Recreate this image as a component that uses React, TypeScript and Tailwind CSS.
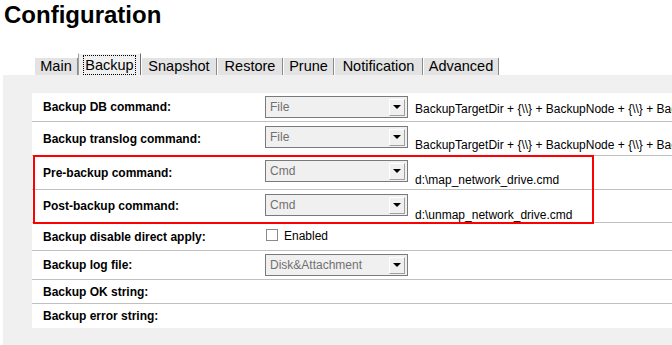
import type { ReactNode } from 'react';

const TABS = [
  { name: 'Main', w: 'w-[44px]' },
  { name: 'Backup', w: 'w-[63px]', active: true },
  { name: 'Snapshot', w: 'w-[76px]' },
  { name: 'Restore', w: 'w-[66px]' },
  { name: 'Prune', w: 'w-[51px]' },
  { name: 'Notification', w: 'w-[89px]' },
  { name: 'Advanced', w: 'w-[76px]' },
];

function Select({ value }: { value: string }) {
  return (
    <div className="flex h-[22px] w-[143px] items-center justify-between border border-[#7a7a7a] bg-[#f0f0f0] pl-[4px] pr-[2px] text-[12px] text-[#707070]">
      <span>{value}</span>
      <div className="flex h-[17px] w-[16px] items-center justify-center border border-t-white border-l-white border-r-[#a0a0a0] border-b-[#a0a0a0] bg-[#f0f0f0]">
        <div className="h-0 w-0 border-x-[4px] border-t-[4px] border-x-transparent border-t-black" />
      </div>
    </div>
  );
}

function Row({ label, h, last, children }: { label: string; h: string; last?: boolean; children?: ReactNode }) {
  return (
    <div className={`flex ${h} ${last ? '' : 'border-b border-[#c0c0c0]'}`}>
      <div className="flex w-[233px] shrink-0 items-center pl-[11px] text-[12px] font-bold">{label}</div>
      <div className="flex min-w-0 flex-1 items-start whitespace-nowrap text-[12px]">{children}</div>
    </div>
  );
}

const FORMULA = 'BackupTargetDir + {\\\\} + BackupNode + {\\\\} + BackupName';

export default function App() {
  return (
    <div className="relative h-[345px] w-[672px] overflow-hidden bg-white font-['Liberation_Sans',Arial,sans-serif] text-black">
      <h1 className="pl-[4px] pt-[1px] text-[24px] font-bold leading-[28px]">Configuration</h1>

      <div className="mt-[24px] flex h-[22px] items-end pl-[34px] text-[14.5px]">
        {TABS.map((tab) =>
          tab.active ? (
            <div
              key={tab.name}
              className={`${tab.w} flex h-[22px] items-center justify-center border-x border-t border-l-[#a0a0a0] border-r-[#6e6e6e] border-t-white bg-[#f0f0f0]`}
            >
              <span className="px-[1px] leading-[18px] outline-1 outline-dotted outline-black">{tab.name}</span>
            </div>
          ) : (
            <div
              key={tab.name}
              className={`${tab.w} flex h-[17px] items-center justify-center border-x border-l-white border-r-[#8a8a8a] bg-[#e3e3e3] leading-[17px]`}
            >
              {tab.name}
            </div>
          ),
        )}
      </div>

      <div className="ml-[3px] h-[270px] bg-[#f0f0f0] pl-[29px] pt-[18px]">
        <div className="bg-white">
          <Row label="Backup DB command:" h="h-[29px]">
            <div className="mt-[3px]">
              <Select value="File" />
            </div>
            <span className="ml-[7px] mt-[7px]">{FORMULA}</span>
          </Row>
          <Row label="Backup translog command:" h="h-[34px]">
            <div className="mt-[4px]">
              <Select value="File" />
            </div>
            <span className="ml-[7px] mt-[14px]">{FORMULA}</span>
          </Row>

          <div className="relative">
            <Row label="Pre-backup command:" h="h-[34px]">
              <div className="mt-[4px]">
                <Select value="Cmd" />
              </div>
              <span className="ml-[7px] mt-[15px]">d:\map_network_drive.cmd</span>
            </Row>
            <Row label="Post-backup command:" h="h-[33px]">
              <div className="mt-[4px]">
                <Select value="Cmd" />
              </div>
              <span className="ml-[7px] mt-[16px]">d:\unmap_network_drive.cmd</span>
            </Row>
            <div className="absolute left-[1px] top-[-1px] h-[69px] w-[561px] border-2 border-[#ff0000]" />
          </div>

          <Row label="Backup disable direct apply:" h="h-[28px]">
            <div className="ml-[1px] mt-[6px] h-[12px] w-[12px] border border-[#8a8a8a] bg-white" />
            <span className="ml-[6px] mt-[4px]">Enabled</span>
          </Row>
          <Row label="Backup log file:" h="h-[29px]">
            <div className="mt-[3px]">
              <Select value="Disk&Attachment" />
            </div>
          </Row>
          <Row label="Backup OK string:" h="h-[24px]" />
          <Row label="Backup error string:" h="h-[24px]" last />
        </div>
      </div>
    </div>
  );
}
